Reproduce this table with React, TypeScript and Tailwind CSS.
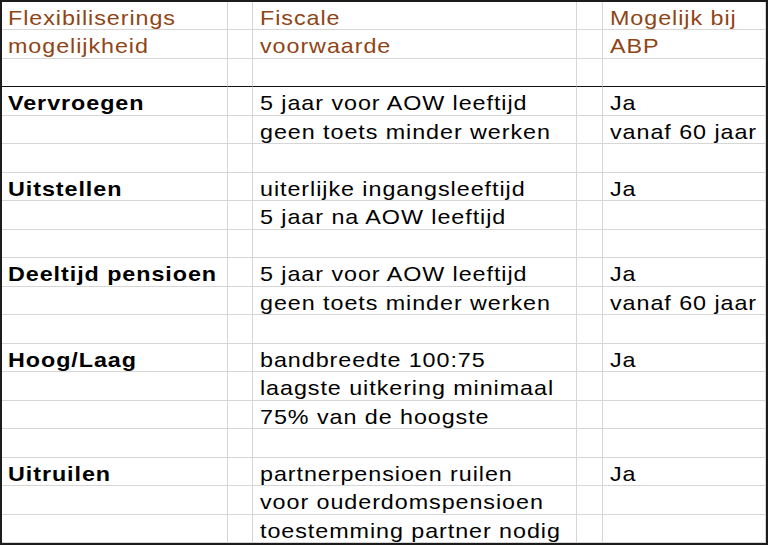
const header: string[][] = [
  ["Flexibiliserings", "Fiscale", "Mogelijk bij"],
  ["mogelijkheid", "voorwaarde", "ABP"],
  ["", "", ""],
];

const rows: string[][] = [
  ["Vervroegen", "5 jaar voor AOW leeftijd", "Ja"],
  ["", "geen toets minder werken", "vanaf 60 jaar"],
  ["", "", ""],
  ["Uitstellen", "uiterlijke ingangsleeftijd", "Ja"],
  ["", "5 jaar na AOW leeftijd", ""],
  ["", "", ""],
  ["Deeltijd pensioen", "5 jaar voor AOW leeftijd", "Ja"],
  ["", "geen toets minder werken", "vanaf 60 jaar"],
  ["", "", ""],
  ["Hoog/Laag", "bandbreedte 100:75", "Ja"],
  ["", "laagste uitkering minimaal", ""],
  ["", "75% van de hoogste", ""],
  ["", "", ""],
  ["Uitruilen", "partnerpensioen ruilen", "Ja"],
  ["", "voor ouderdomspensioen", ""],
  ["", "toestemming partner nodig", ""],
];

function Cell({ text, className, divider }: { text?: string; className?: string; divider?: boolean }) {
  return (
    <div
      className={`border-r border-b ${divider ? "border-b-[#111]" : "border-b-[#d6d6d6]"} border-r-[#d6d6d6] overflow-hidden whitespace-nowrap leading-[28px] pt-[2px] ${className ?? ""}`}
    >
      {text && <span className="inline-block origin-left scale-x-[1.11]">{text}</span>}
    </div>
  );
}

export default function App() {
  return (
    <div className="w-[768px] h-[545px] bg-white">
      <div
        className="w-[768px] h-[545px] border-2 border-[#1c1c1c] grid grid-cols-[226px_25px_324px_26px_163px] auto-rows-fr text-[21px] tracking-[0.85px] text-black"
        style={{ fontFamily: '"Liberation Sans", Arial, sans-serif' }}
      >
        {header.map((r, i) => (
          <div key={"h" + i} className="contents text-[#8f4516]">
            <Cell text={r[0]} className="pl-[6px]" divider={i === 2} />
            <Cell divider={i === 2} />
            <Cell text={r[1]} className="pl-[7px]" divider={i === 2} />
            <Cell divider={i === 2} />
            <Cell text={r[2]} className="pl-[7px]" divider={i === 2} />
          </div>
        ))}
        {rows.map((r, i) => (
          <div key={"r" + i} className="contents">
            <Cell text={r[0]} className="pl-[6px] font-bold" />
            <Cell />
            <Cell text={r[1]} className="pl-[7px]" />
            <Cell />
            <Cell text={r[2]} className="pl-[7px]" />
          </div>
        ))}
      </div>
    </div>
  );
}
